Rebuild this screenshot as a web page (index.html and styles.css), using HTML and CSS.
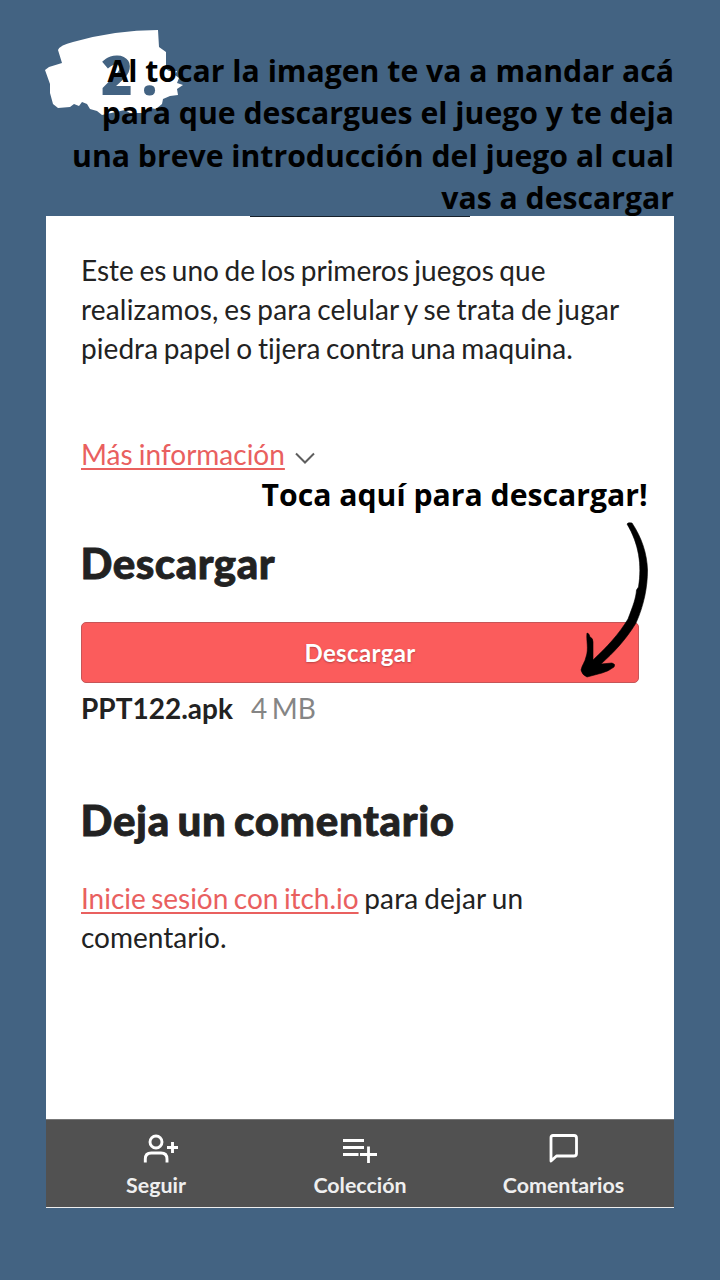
FILE: index.html
```html
<!DOCTYPE html>
<html lang="es">
<head>
<meta charset="utf-8">
<title>Descargar</title>
<link rel="stylesheet" href="styles.css">
</head>
<body>
<main class="story">
  <div class="step">
    <svg class="brush" width="140" height="88" viewBox="0 0 140 88"><path fill="#fff" d="M13 22Q15 17 28 14Q70 2 113 2L114 19L121 24L121 41L124 43L132 43L130 47L134 50L132 55L138 57L132 61L133 67L125 68L118 71L117 76L111 81L105 80L101 85L85 85L80 82L57 87L52 83L45 81L42 76L37 74L34 78L29 76L25 79L13 80L8 76L5 65L5 56L0 42L4 39L17 35Z"/></svg>
    <span class="step-number">2<span class="step-dot">.</span></span>
  </div>
  <header class="caption">
    <div>Al tocar la imagen te va a mandar acá</div>
    <div>para que descargues el juego y te deja</div>
    <div>una breve introducción del juego al cual</div>
    <div>vas a descargar</div>
  </header>
  <section class="phone">
    <div class="edge"></div>
    <div class="content">
      <p class="intro"><span class="tight">Este es uno de los primeros juegos que</span><br><span class="loose">realizamos, es para celular y se trata de jugar</span><br><span class="medium">piedra papel o tijera contra una maquina.</span></p>
      <div class="more"><a class="link">Más información</a><svg class="chevron" width="20" height="12" viewBox="0 0 20 12"><path d="M1 1.5 10 10.5 19 1.5" fill="none" stroke="#5e5e5e" stroke-width="2"/></svg></div>
      <h2 class="title">Descargar</h2>
      <div class="button">Descargar</div>
      <div class="file"><b class="file-name">PPT122.apk</b><span class="size">4 MB</span></div>
      <h2 class="title comments-title">Deja un comentario</h2>
      <p class="login"><a class="link">Inicie sesión con itch.io</a> <span class="rest">para dejar un</span><br>comentario.</p>
    </div>
    <nav class="bar">
      <div class="tab follow">
        <svg width="36" height="32" viewBox="0 0 36 32" fill="none" stroke="#fff" stroke-width="2.9"><circle cx="13" cy="9" r="6"/><path d="M2.3 29.5V26Q2.3 20 8.3 20H18Q24 20 24 26V29.5M24 14.5H35M29.5 9V20"/></svg>
        <span>Seguir</span>
      </div>
      <div class="tab collection">
        <svg width="36" height="32" viewBox="0 0 36 32" fill="none" stroke="#fff" stroke-width="2.8"><path d="M1 7.5H22M1 14.5H22M1 21.5H16.5M18 21.5H35M26.5 13.5V30"/></svg>
        <span>Colección</span>
      </div>
      <div class="tab comments">
        <svg width="30" height="32" viewBox="0 0 30 32" fill="none" stroke="#fff" stroke-width="2.8" stroke-linejoin="round"><path d="M2 28V4.5Q2 2.5 4 2.5H25Q27.5 2.5 27.5 5V20.5Q27.5 23 25 23H7.5Z"/></svg>
        <span>Comentarios</span>
      </div>
    </nav>
  </section>
  <div class="hint">Toca aquí para descargar!</div>
  <svg class="arrow" width="70" height="158" viewBox="0 0 70 158"><path d="M47 4Q48 2 52 3C62 18 67 34 67.500 50C67.500 67 64 85 56 103C45 121 33 133 21 144L32 143Q36 144 34 147Q29 151 22 153L7 157Q2 155 1 150C2 145 5 142 6 137C9 129 6 120 7 113Q9 113 10 117Q13 118 13 122L13 140C27 127 39 114 48 99C53 86 56 78 56.500 70L58.500 67C62 45 59 24 47 4Z" stroke="#000" stroke-width=".6"/></svg>
</main>
</body>
</html>
```
FILE: styles.css
```css
body { margin: 0; }
.story { position: relative; width: 720px; height: 1280px; box-sizing: border-box; padding: 50px 46px 0; overflow: hidden; background: #436382; font-family: Lato, sans-serif; font-variant-ligatures: none; color: #222; }
.step { position: absolute; left: 45px; top: 28px; }
.brush { display: block; }
.step-number { position: absolute; left: 56px; top: 16px; font: 800 54px/60px "Open Sans", sans-serif; color: #436382; white-space: nowrap; }
.step-dot { margin-left: 9px; }
.caption { position: relative; height: 166px; text-align: right; font: 700 30.2px/42.3px "Open Sans", sans-serif; color: #000; white-space: nowrap; }
.phone { width: 628px; height: 992px; display: flex; flex-direction: column; background: #fff; }
.edge { width: 220px; height: 1px; margin-left: 204px; background: #17212b; }
.content { flex: 1; padding: 34px 35px 0; white-space: nowrap; }
.intro, .login { margin: 0; font-size: 28px; line-height: 39px; }
.tight { word-spacing: -1.6px; }
.loose { word-spacing: -1.6px; letter-spacing: .18px; }
.medium { word-spacing: -1.6px; letter-spacing: .06px; }
.more { display: flex; align-items: center; margin-top: 67px; font-size: 28px; line-height: 39px; word-spacing: -1px; }
.link { color: #e9605f; text-decoration: underline; text-decoration-thickness: 2px; text-underline-offset: 3px; text-decoration-skip-ink: none; }
.chevron { margin: 7px 0 0 10px; }
.title { margin: 63px 0 0; font-size: 42px; line-height: 52px; font-weight: 900; letter-spacing: .5px; word-spacing: -3px; -webkit-text-stroke: .8px #222; text-indent: -.5px; }
.button { height: 59px; margin-top: 33px; border: 1px solid #c65557; border-radius: 5px; background: #fb5c5c; color: #fff; text-align: center; font-size: 24px; line-height: 59px; font-weight: 700; letter-spacing: .35px; text-shadow: 0 1px 2px #b84444; }
.file { display: flex; gap: 18px; margin-top: 6px; font-size: 28px; line-height: 39px; }
.size { color: #858585; word-spacing: -2.5px; }
.comments-title { margin-top: 66px; letter-spacing: .67px; }
.login { margin-top: 33px; word-spacing: -1.6px; }
.login .link { letter-spacing: -.03px; }
.rest { letter-spacing: .2px; }
.bar { height: 89px; box-sizing: border-box; border-top: 1px solid #777; border-bottom: 1px solid #eee; background: #515151; display: grid; grid-template-columns: 220px 188px 220px; color: #efefef; font-size: 21.4px; line-height: 28px; font-weight: 700; }
.tab { display: flex; flex-direction: column; align-items: center; padding-top: 13px; gap: 6px; }
.follow svg { margin-left: 10px; }
.comments { padding-right: 1px; }
.hint { position: absolute; left: 261.5px; top: 475px; font: 700 30.2px/40px "Open Sans", sans-serif; color: #000; white-space: nowrap; }
.arrow { position: absolute; left: 580px; top: 520px; }
```
